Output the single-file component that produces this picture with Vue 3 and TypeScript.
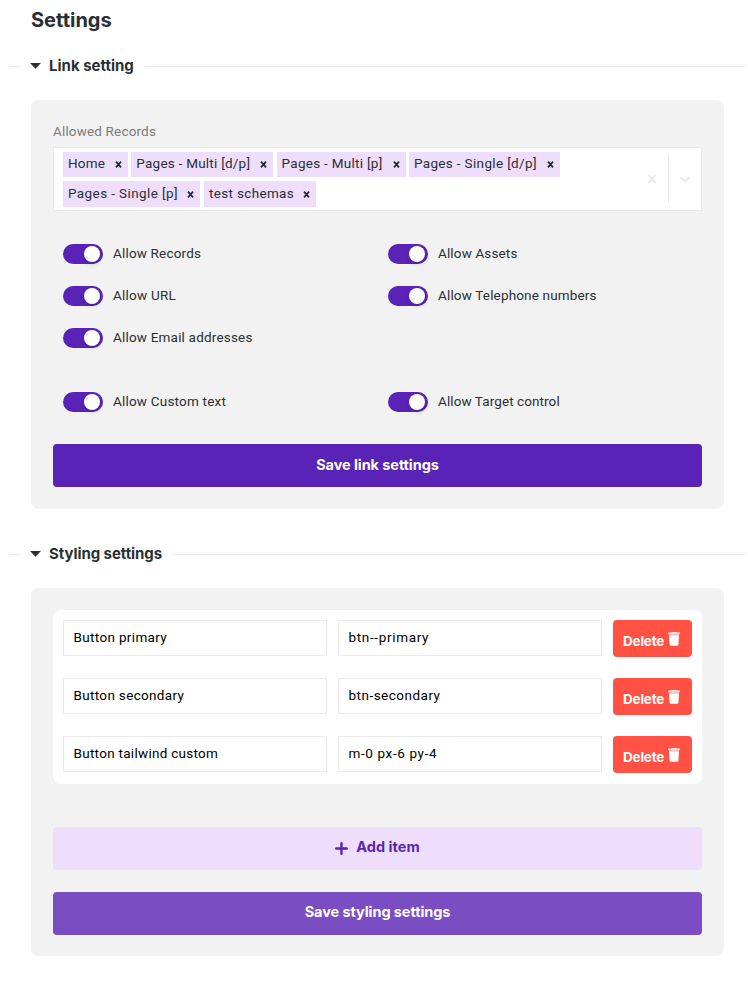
<script setup lang="ts">
import { ref } from 'vue'

interface Item {
  text: string
  tracking: number
}
interface Toggle extends Item {
  on: boolean
}
interface StyleRow {
  label: Item
  value: Item
}

const records: (Item & { width: number })[][] = [
  [
    { text: 'Home', tracking: 0.17, width: 65 },
    { text: 'Pages - Multi [d/p]', tracking: 0.24, width: 142 },
    { text: 'Pages - Multi [p]', tracking: 0.28, width: 129 },
    { text: 'Pages - Single [d/p]', tracking: 0.35, width: 151 },
  ],
  [
    { text: 'Pages - Single [p]', tracking: 0.4, width: 137 },
    { text: 'test schemas', tracking: 0.33, width: 112 },
  ],
]

const sources = ref<Toggle[]>([
  { text: 'Allow Records', tracking: 0.17, on: true },
  { text: 'Allow Assets', tracking: 0.14, on: true },
  { text: 'Allow URL', tracking: 0.23, on: true },
  { text: 'Allow Telephone numbers', tracking: 0.16, on: true },
  { text: 'Allow Email addresses', tracking: 0.19, on: true },
])
const extras = ref<Toggle[]>([
  { text: 'Allow Custom text', tracking: 0.2, on: true },
  { text: 'Allow Target control', tracking: 0.09, on: true },
])

const rows: StyleRow[] = [
  { label: { text: 'Button primary', tracking: 0.34 }, value: { text: 'btn--primary', tracking: 0.66 } },
  { label: { text: 'Button secondary', tracking: 0.33 }, value: { text: 'btn-secondary', tracking: 0.49 } },
  { label: { text: 'Button tailwind custom', tracking: 0.28 }, value: { text: 'm-0 px-6 py-4', tracking: 0.62 } },
]

const spacing = (i: Item) => ({ letterSpacing: `${i.tracking}px` })
</script>

<template>
  <main class="page">
    <h1 class="title">Settings</h1>

    <section>
      <header class="section-head">
        <svg class="caret" viewBox="0 0 11 6"><path d="M0 0H11L5.5 5.8Z" /></svg>
        <h2>Link setting</h2>
      </header>
      <div class="panel">
        <div class="field-label">Allowed Records</div>
        <div class="select">
          <div class="chips">
            <div v-for="(line, n) in records" :key="n" class="chip-line">
              <div v-for="r in line" :key="r.text" class="chip" :style="{ width: `${r.width}px` }">
                <span :style="spacing(r)">{{ r.text }}</span>
                <svg viewBox="0 0 7 7"><path d="M1 .6 6 6.4M6 .6 1 6.4" /></svg>
              </div>
            </div>
          </div>
          <div class="clear">
            <svg viewBox="0 0 10 10"><path d="M1.2 .8 8.8 9.2M8.8 .8 1.2 9.2" /></svg>
          </div>
          <div class="divider"></div>
          <div class="drop">
            <svg viewBox="0 0 12 7"><path d="M1.2 1.2 6 5.2 10.8 1.2" /></svg>
          </div>
        </div>

        <div class="toggles">
          <div v-for="t in sources" :key="t.text" class="toggle" @click="t.on = !t.on">
            <span class="switch" :class="{ on: t.on }"><i></i></span>
            <span :style="spacing(t)">{{ t.text }}</span>
          </div>
        </div>
        <div class="toggles extra">
          <div v-for="t in extras" :key="t.text" class="toggle" @click="t.on = !t.on">
            <span class="switch" :class="{ on: t.on }"><i></i></span>
            <span :style="spacing(t)">{{ t.text }}</span>
          </div>
        </div>

        <button class="btn primary">Save link settings</button>
      </div>
    </section>

    <section class="styling">
      <header class="section-head">
        <svg class="caret" viewBox="0 0 11 6"><path d="M0 0H11L5.5 5.8Z" /></svg>
        <h2>Styling settings</h2>
      </header>
      <div class="panel">
        <div class="card">
          <div v-for="row in rows" :key="row.label.text" class="row">
            <div class="input" :style="spacing(row.label)">{{ row.label.text }}</div>
            <div class="input" :style="spacing(row.value)">{{ row.value.text }}</div>
            <button class="delete">
              <span>Delete</span>
              <svg viewBox="0 0 12 14">
                <path d="M0 1.1Q0 .6.6.6H3.5L4.2 0H7.8L8.5.6H11.4Q12 .6 12 1.1V1.7H0Z" />
                <path class="soft" d="M.8 1.7H11.2V3.2H.9Z" />
                <path d="M1 3.2H11L10.4 12.4Q10.3 13.7 9 13.7H3Q1.7 13.7 1.6 12.4Z" />
              </svg>
            </button>
          </div>
        </div>
        <button class="btn light">
          <svg viewBox="0 0 13 13"><path d="M6.5 1.2V11.8M1.2 6.5H11.8" /></svg>
          <span>Add item</span>
        </button>
        <button class="btn muted">Save styling settings</button>
      </div>
    </section>
  </main>
</template>

<style>
body {
  background: #fff;
}
</style>

<style scoped>
* {
  box-sizing: border-box;
}
.page {
  padding: 8px 0 26px;
  color: #2b2f33;
  font: 400 13.5px/20px Roboto, "Liberation Sans", sans-serif;
}
h1,
h2 {
  margin: 0;
  font-family: Inter, "Liberation Sans", sans-serif;
}
.title {
  margin-left: 31px;
  font-size: 20px;
  font-weight: 650;
  line-height: 24px;
  letter-spacing: 0;
}
.section-head {
  display: flex;
  align-items: center;
  height: 21px;
  margin: 23px 2px 0 10px;
}
.section-head::before,
.section-head::after {
  content: "";
  height: 1px;
  margin-top: 1px;
  background: #ececec;
}
.section-head::before {
  width: 10px;
}
.section-head::after {
  flex: 1;
  margin-left: 11px;
}
.caret {
  width: 11px;
  height: 6px;
  margin: 1px 8px 0 10px;
  fill: #2b2f33;
}
h2 {
  font-size: 15px;
  font-weight: 650;
  line-height: 20px;
  letter-spacing: 0;
}
.panel {
  margin: 24px 24px 0 31px;
  padding: 22px;
  border-radius: 8px;
  background: #f2f2f2;
}
.styling .section-head {
  margin-top: 34px;
}
.styling h2 {
  letter-spacing: -0.08px;
}
.field-label {
  height: 20px;
  margin-bottom: 5px;
  color: #7a7a7a;
  line-height: 18px;
  letter-spacing: 0.16px;
}
.select {
  display: flex;
  align-items: center;
  height: 64px;
  border: 1px solid #ebebeb;
  background: #fff;
}
.chips {
  display: grid;
  flex: 1;
  gap: 4px;
  padding-left: 9px;
}
.chip-line {
  display: flex;
  gap: 3.3px;
}
.chip-line + .chip-line {
  gap: 4px;
}
.chip {
  display: flex;
  align-items: center;
  justify-content: space-between;
  height: 25.5px;
  padding: 0 6px 0 5px;
  background: #eedefb;
  white-space: nowrap;
}
.chip span {
  line-height: 19px;
  padding-bottom: 1px;
}
.chip svg {
  width: 7px;
  height: 7px;
  margin-top: 1px;
  overflow: visible;
  fill: none;
  stroke: #24272b;
  stroke-width: 1.7;
}
.clear,
.drop {
  display: flex;
  justify-content: center;
  width: 32px;
}
.clear svg,
.drop svg {
  fill: none;
  stroke: #ebebeb;
  stroke-width: 2.4;
}
.clear svg {
  width: 10px;
  height: 10px;
}
.drop svg {
  width: 12px;
  height: 7px;
}
.divider {
  width: 1px;
  height: 48px;
  background: #ebebeb;
}
.toggles {
  display: grid;
  grid-template-columns: 325px 1fr;
  row-gap: 22px;
  padding: 33px 0 0 10px;
}
.toggles.extra {
  padding-top: 44px;
  padding-bottom: 32px;
}
.toggle {
  display: flex;
  gap: 10px;
  height: 20px;
  line-height: 19px;
}
.switch {
  display: flex;
  width: 40px;
  height: 20px;
  padding: 2px 3px;
  border-radius: 10px;
  background: #aaa;
}
.switch.on {
  justify-content: flex-end;
  background: #5a23b7;
}
.switch i {
  width: 16px;
  height: 16px;
  border-radius: 50%;
  background: #fff;
  box-shadow: 0 2px 4px rgba(0, 35, 11, 0.2);
}
button {
  border: 0;
  font-family: Inter, "Liberation Sans", sans-serif;
}
.btn {
  display: flex;
  align-items: center;
  justify-content: center;
  width: 100%;
  height: 43px;
  padding: 0 0 3px;
  border-radius: 4px;
  color: #fff;
  font-size: 14.5px;
  font-weight: 700;
  letter-spacing: -0.08px;
}
.primary {
  background: #5a23b7;
}
.light {
  gap: 8px;
  margin: 43px 0 22px;
  padding-bottom: 5px;
  background: #eedefb;
  color: #5a23b7;
  font-weight: 650;
  letter-spacing: 0.05px;
}
.light svg {
  width: 13px;
  height: 13px;
  margin-top: 5px;
  fill: none;
  stroke: #5a23b7;
  stroke-width: 2.4;
  stroke-linecap: round;
}
.muted {
  padding-bottom: 5px;
  background: #7a4dc2;
}
.styling .panel {
  padding-bottom: 21px;
}
.card {
  display: grid;
  gap: 21px;
  padding: 10px 10px 11px;
  border-radius: 8px;
  background: #fff;
}
.row {
  display: grid;
  grid-template-columns: 264px 264px 79px;
  gap: 11px;
  height: 37px;
}
.input {
  height: 36px;
  padding: 0 9.5px;
  border: 1px solid #ebebeb;
  color: #000;
  line-height: 33px;
}
.delete {
  display: flex;
  align-items: flex-start;
  gap: 3.5px;
  padding: 12px 0 0 10px;
  border-radius: 4px;
  background: #ff5244;
  color: #fff;
  font-size: 13.5px;
  font-weight: 700;
  line-height: 19px;
  letter-spacing: -0.2px;
}
.delete svg {
  flex: none;
  width: 12px;
  height: 14px;
  fill: #fff;
}
.delete .soft {
  opacity: 0.6;
}
</style>
